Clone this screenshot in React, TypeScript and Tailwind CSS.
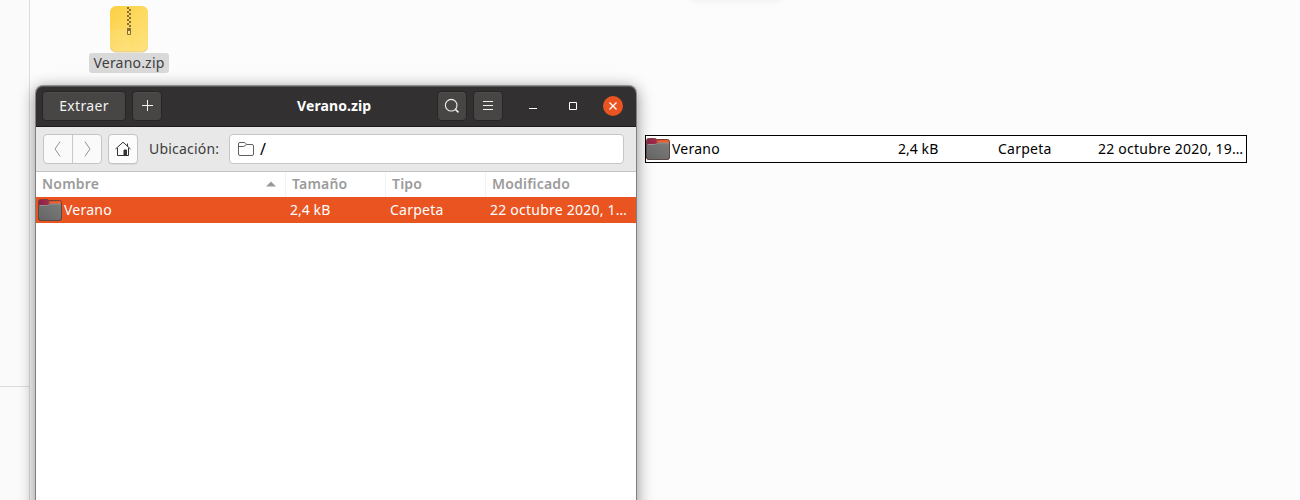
import type { ReactNode } from "react";

function Folder({ id }: { id: string }) {
  return (
    <svg width="24" height="22" viewBox="0 0 24 22" className="block shrink-0">
      <defs>
        <linearGradient id={`${id}-back`} x1="0" x2="1">
          <stop offset="0" stopColor="#83244f" />
          <stop offset="0.4" stopColor="#a02c48" />
          <stop offset="0.6" stopColor="#d3502e" />
          <stop offset="1" stopColor="#e8602b" />
        </linearGradient>
        <linearGradient id={`${id}-front`} x1="0" x2="1" y1="1" y2="0">
          <stop offset="0" stopColor="#646464" />
          <stop offset="1" stopColor="#7c7c7c" />
        </linearGradient>
      </defs>
      <path d="M0.5 2.5Q.5.5 2.5.5H8.5Q10 .5 10.8 1.5H21.5Q23.5 1.5 23.5 3.5V19Q23.5 21.5 21 21.5H3Q.5 21.5.5 19Z" fill={`url(#${id}-back)`} stroke="#7b3f38" strokeWidth="1" />
      <path d="M11 3.5H22.5" stroke="#e8652f" strokeWidth="1.4" />
      <path d="M1 8Q1 6.5 2 6.5H8.5Q9.7 6.5 10.5 5.9T12.5 5H22Q23 5 23 6.5V19Q23 21 21 21H3Q1 21 1 19Z" fill={`url(#${id}-front)`} />
      <path d="M1.5 6.5H8.8Q10 6.3 10.8 5.7T12.8 5H22.5" fill="none" stroke="#929292" strokeWidth="1" />
      <path d="M.5 8V19Q.5 21.5 3 21.5H21Q23.5 21.5 23.5 19V6" fill="none" stroke="#5a4a46" />
    </svg>
  );
}

function ZipIcon() {
  const teeth = Array.from({ length: 10 }, (_, i) => i);
  return (
    <svg width="38" height="47" viewBox="0 0 38 47" className="block">
      <defs>
        <linearGradient id="zip-fill" x1="0" x2="0.8" y1="0" y2="1">
          <stop offset="0" stopColor="#fdd043" />
          <stop offset="0.55" stopColor="#fdda63" />
          <stop offset="1" stopColor="#fde17a" />
        </linearGradient>
      </defs>
      <rect y="1" width="38" height="45.5" rx="6" fill="#dccb98" />
      <rect width="38" height="45.5" rx="6" fill="url(#zip-fill)" />
      <path d="M0 23H19V45.5H6Q0 45.5 0 40Z" fill="#fff" opacity="0.07" />
      {teeth.map((i) => (
        <rect key={i} x={i % 2 ? 19 : 17} y={1 + i * 2} width="2" height="2" fill="#81703a" />
      ))}
      <path d="M17.5 22.5H20.5V28.5H17.5Z" fill="#fde48a" stroke="#81703a" />
      <path d="M17 22H21V25H17Z" fill="#81703a" />
    </svg>
  );
}

function DarkButton({ className, children }: { className: string; children: ReactNode }) {
  return (
    <button className={`flex h-[30px] shrink-0 items-center justify-center rounded-[4px] border border-[#272525] bg-[#484644] shadow-[inset_0_1px_0_#504e4c] ${className}`}>
      {children}
    </button>
  );
}

function TitleBar() {
  return (
    <header className="flex h-[41px] shrink-0 rounded-t-[7px] border-b border-[#1d1c1c] bg-[#323031] pt-[5px] pl-[6px] text-white shadow-[inset_0_1px_0_#5a5858]">
      <DarkButton className="w-[84px]">
        <span className="text-[14px] leading-5 tracking-[0.35px] text-[#f2f2f2]">Extraer</span>
      </DarkButton>
      <DarkButton className="ml-[6px] w-[30px]">
        <svg width="12" height="12" viewBox="0 0 12 12" fill="none" stroke="#f3f3f3">
          <path d="M6.5 0V11M1 5.5H12" />
        </svg>
      </DarkButton>
      <h1 className="ml-[135px] w-[140px] text-[14px] leading-[30px] font-bold tracking-[0.1px]">Verano.zip</h1>
      <DarkButton className="w-[30px]">
        <svg width="16" height="16" viewBox="0 0 16 16" fill="none" stroke="#ededed" strokeWidth="1.1">
          <circle cx="7.2" cy="7.2" r="5.8" />
          <path d="M11.4 11.4L14.5 14.3" strokeWidth="1.6" />
        </svg>
      </DarkButton>
      <DarkButton className="ml-[6px] w-[30px]">
        <svg width="10" height="10" viewBox="0 0 10 10" stroke="#f0f0f0">
          <path d="M0 .5H10M0 4.5H10M0 8.5H10" />
        </svg>
      </DarkButton>
      <div className="mt-[5px] ml-[21px] flex h-5 items-center">
        <svg width="20" height="20" viewBox="0 0 20 20" stroke="#fff">
          <path d="M5 12.5H13" />
        </svg>
        <svg width="20" height="20" viewBox="0 0 20 20" fill="none" stroke="#fff" className="ml-5">
          <path d="M5.5 6.5H12.5V13.5H5.5Z" />
        </svg>
        <svg width="20" height="20" viewBox="0 0 20 20" className="ml-[19px]">
          <circle cx="10" cy="10" r="10" fill="#e95420" />
          <path d="M6.5 6.5L13.5 13.5M13.5 6.5L6.5 13.5" stroke="#fff" strokeWidth="1.3" />
        </svg>
      </div>
    </header>
  );
}

function Toolbar() {
  return (
    <div className="flex h-[45px] shrink-0 items-start border-b border-[#c4c4c4] bg-[#e8e8e8] pt-[7px] pl-[7px]">
      <div className="flex h-[30px] w-[59px] rounded-[4px] border border-[#c4c4c4] bg-[#fafafa]">
        <div className="flex w-[29px] items-center border-r border-[#c9c9c9] pl-[10px]">
          <svg width="7" height="16" viewBox="0 0 7 16" fill="none" stroke="#929292"><path d="M6 .7L1 8L6 15.3" /></svg>
        </div>
        <div className="flex w-[28px] items-center pl-[11px]">
          <svg width="7" height="16" viewBox="0 0 7 16" fill="none" stroke="#929292"><path d="M1 .7L6 8L1 15.3" /></svg>
        </div>
      </div>
      <div className="ml-[6px] flex h-[30px] w-[30px] items-center justify-center rounded-[4px] border border-[#c4c4c4] bg-[#fcfcfc] shadow-[0_1px_0_#d9d9d9]">
        <svg width="16" height="16" viewBox="0 0 16 16" fill="none" stroke="#333">
          <path d="M.5 8L8 1.2L15.5 8M2.5 7V14.5H13.5V7M12.5 2.5V5.5" />
          <path d="M9 9H11.5V14.5H9Z" fill="#333" />
        </svg>
      </div>
      <span className="ml-[11px] w-[80px] text-[14px] leading-[30px] tracking-[0.2px] whitespace-nowrap text-[#3d3d3d]">Ubicación:</span>
      <div className="flex h-[30px] w-[395px] items-center rounded-[4px] border border-[#c6c6c6] bg-white pl-[8px]">
        <svg width="16" height="14" viewBox="0 0 16 14" fill="none" stroke="#606060">
          <path d="M.5 2Q.5.5 2 .5H6.2Q7.2.5 7.6 1.5T9 2.5H14Q15.5 2.5 15.5 4V12Q15.5 13.5 14 13.5H2Q.5 13.5.5 12ZM.5 4.5H5.5Q7 4.5 8 2.5" />
        </svg>
        <span className="ml-[6px] text-[16px] leading-7 text-black">/</span>
      </div>
    </div>
  );
}

function FileTable() {
  return (
    <>
      <div className="grid h-[25px] shrink-0 grid-cols-[250px_100px_100px_150px] text-[14px] leading-6 font-semibold tracking-[0.2px] text-[#9b9b9b]">
        <div className="flex items-start justify-between border-r border-[#f3f3f3] pr-[9px] pl-[6px]">
          Nombre
          <svg width="10" height="6" viewBox="0 0 10 6" className="mt-[9px]"><path d="M0 5.5L5 .5L10 5.5Z" fill="#999" /></svg>
        </div>
        <div className="border-r border-[#f3f3f3] pl-[6px]">Tamaño</div>
        <div className="border-r border-[#f3f3f3] pl-[6px]">Tipo</div>
        <div className="pl-[6px]">Modificado</div>
      </div>
      <div className="grid h-[26px] shrink-0 grid-cols-[254px_100px_100px_146px] bg-[#e95420] text-[14px] leading-[26px] tracking-[0.23px] whitespace-nowrap text-white">
        <div className="flex items-center gap-[2px] pl-[2px]"><Folder id="row" /><span>Verano</span></div>
        <div className="tracking-[0.05px]">2,4 kB</div>
        <div>Carpeta</div>
        <div>22 octubre 2020, 1…</div>
      </div>
    </>
  );
}

export default function App() {
  return (
    <main className="relative flex h-[500px] w-[1300px] overflow-hidden bg-[#fcfcfc] font-['Noto_Sans',sans-serif]">
      <aside className="flex w-[30px] flex-col border-r border-[#dcdcdc] bg-[#fafafa]">
        <div className="h-[387px] border-b border-[#dcdcdc]" />
      </aside>
      <div className="absolute -top-[10px] left-[690px] h-[7px] w-[92px] rounded-full shadow-[0_1px_8px_#00000020]" />
      <div className="absolute top-[6px] left-[89px] flex w-[80px] flex-col items-center">
        <ZipIcon />
        <span className="h-5 w-[80px] rounded-[3px] bg-[#d9d9d9] text-center text-[14px] leading-5 tracking-[0.2px] text-[#404040]">Verano.zip</span>
      </div>
      <section className="absolute top-[86px] left-[36px] flex h-[440px] w-[600px] flex-col rounded-t-[7px] bg-white shadow-[0_0_0_1px_#00000055,0_3px_16px_1px_#00000073]">
        <TitleBar />
        <Toolbar />
        <FileTable />
      </section>
      <div className="absolute top-[135px] left-[645px] grid h-[28px] w-[602px] grid-cols-[252px_100px_100px_148px] border border-black bg-white text-[14px] leading-[26px] tracking-[0.23px] whitespace-nowrap text-black">
        <div className="flex items-center gap-[2px]"><Folder id="drag" /><span>Verano</span></div>
        <div className="tracking-[0.05px]">2,4 kB</div>
        <div>Carpeta</div>
        <div>22 octubre 2020, 19…</div>
      </div>
    </main>
  );
}
